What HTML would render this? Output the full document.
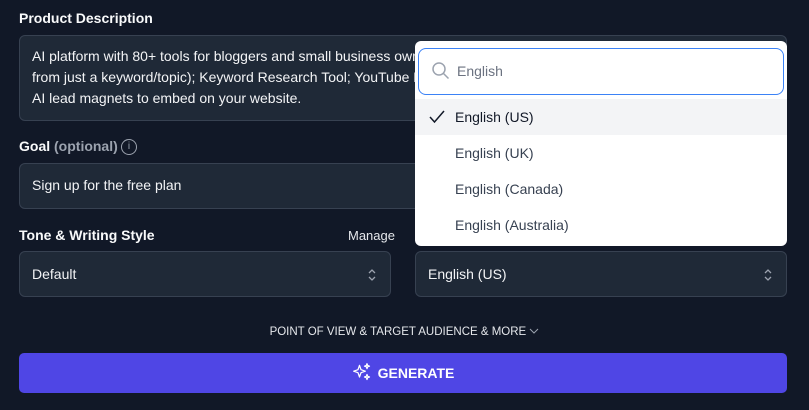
<!DOCTYPE html>
<html><head><style>
*{box-sizing:border-box;margin:0;padding:0}
body{width:809px;height:410px;background:#111827;font-family:"Liberation Sans",sans-serif;color:#f3f4f6;position:relative;overflow:hidden;font-size:14px}
.abs{position:absolute}
.lbl{font-weight:bold;font-size:14px;color:#f9fafb}
.box{background:#1f2937;border:1px solid #374151;border-radius:6px}
.chev{position:absolute;right:12px;top:14px}
</style></head><body>
<div class="abs lbl" style="left:19px;top:10px">Product Description</div>
<div class="abs box" style="left:19px;top:35px;width:768px;height:86px;padding:10px 12px;line-height:21px;font-size:14px;white-space:nowrap;overflow:hidden">AI platform with 80+ tools for bloggers and small business owners<br>from just a keyword/topic); Keyword Research Tool; YouTube Blog<br>AI lead magnets to embed on your website.</div>
<div class="abs lbl" style="left:19px;top:138px">Goal <span style="color:#9ca3af;font-weight:bold">(optional)</span></div>
<div class="abs" style="left:121px;top:139px;width:16px;height:16px;border:1.3px solid #9ca3af;border-radius:50%;color:#9ca3af;font-size:10px;text-align:center;line-height:13px">i</div>
<div class="abs box" style="left:19px;top:163px;width:768px;height:46px;padding:13px 12px">Sign up for the free plan</div>
<div class="abs lbl" style="left:19px;top:227px">Tone &amp; Writing Style</div>
<div class="abs" style="left:348px;top:228px;font-size:13px;color:#e5e7eb">Manage</div>
<div class="abs box" style="left:19px;top:251px;width:372px;height:46px;padding:14px 12px">Default
<svg class="chev" width="12" height="18" viewBox="0 0 12 18"><path d="M3 7l3-3 3 3M3 11l3 3 3-3" stroke="#9ca3af" stroke-width="1.3" fill="none"/></svg></div>
<div class="abs box" style="left:415px;top:251px;width:372px;height:46px;padding:14px 12px">English (US)
<svg class="chev" width="12" height="18" viewBox="0 0 12 18"><path d="M3 7l3-3 3 3M3 11l3 3 3-3" stroke="#9ca3af" stroke-width="1.3" fill="none"/></svg></div>
<div class="abs" style="left:0;width:809px;top:326px;text-align:center;font-size:11.5px;color:#e5e7eb">POINT OF VIEW &amp; TARGET AUDIENCE &amp; MORE <svg width="10" height="8" viewBox="0 0 10 8"><path d="M1 2l4 4 4-4" stroke="#9ca3af" fill="none"/></svg></div>
<div class="abs" style="left:19px;top:353px;width:768px;height:40px;background:#4f46e5;border-radius:5px;text-align:center;line-height:40px;font-weight:bold;font-size:14px;color:#fff">
<svg width="20" height="20" viewBox="0 0 24 24" style="vertical-align:-4px;margin-right:6px"><path d="M9 4l1.8 5.2L16 11l-5.2 1.8L9 18l-1.8-5.2L2 11l5.2-1.8z M18 2l.8 2.2L21 5l-2.2.8L18 8l-.8-2.2L15 5l2.2-.8z M18 15l.8 2.2L21 18l-2.2.8L18 21l-.8-2.2L15 18l2.2-.8z" stroke="#fff" stroke-width="1.5" fill="none" stroke-linejoin="round"/></svg>GENERATE</div>
<div class="abs" style="left:415px;top:41px;width:372px;height:205px;background:#fff;border-radius:6px;color:#111827">
<div class="abs" style="left:3px;top:7px;width:366px;height:47px;border:1.5px solid #3b82f6;border-radius:8px;padding:14px 0 0 38px;color:#6b7280">English
<svg class="abs" style="left:12px;top:12px" width="20" height="20" viewBox="0 0 20 20"><circle cx="8" cy="8" r="6" stroke="#9ca3af" stroke-width="1.5" fill="none"/><path d="M12.5 12.5l5 5" stroke="#9ca3af" stroke-width="1.5"/></svg></div>
<div class="abs" style="left:0;top:58px;width:372px;height:36px;background:#f3f4f6"></div>
<svg class="abs" style="left:14px;top:69px" width="16" height="14" viewBox="0 0 16 14"><path d="M1 7l4.5 5L15 1" stroke="#111827" stroke-width="1.5" fill="none"/></svg>
<div class="abs" style="left:40px;top:68px">English (US)</div>
<div class="abs" style="left:40px;top:104px;color:#374151">English (UK)</div>
<div class="abs" style="left:40px;top:140px;color:#374151">English (Canada)</div>
<div class="abs" style="left:40px;top:176px;color:#374151">English (Australia)</div>
</div>
</body></html>
